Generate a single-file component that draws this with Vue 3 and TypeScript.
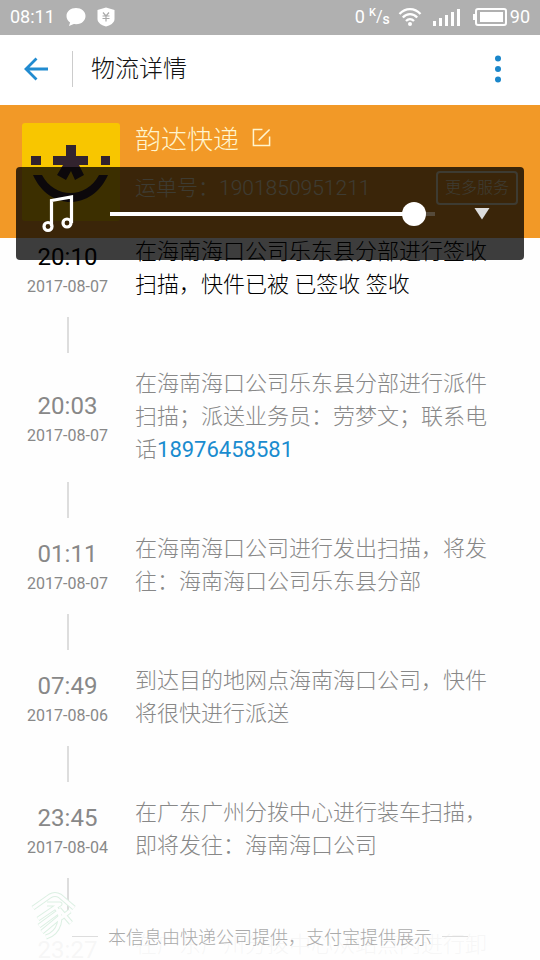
<script setup lang="ts">
import { ref } from 'vue'

interface Step {
  time: string
  date: string
  text: string
  phone?: string
}

const volume = ref<number>(97)

const steps: Step[] = [
  { time: '20:10', date: '2017-08-07', text: '在海南海口公司乐东县分部进行签收扫描，快件已被 已签收 签收' },
  { time: '20:03', date: '2017-08-07', text: '在海南海口公司乐东县分部进行派件扫描；派送业务员：劳梦文；联系电话', phone: '18976458581' },
  { time: '01:11', date: '2017-08-07', text: '在海南海口公司进行发出扫描，将发往：海南海口公司乐东县分部' },
  { time: '07:49', date: '2017-08-06', text: '到达目的地网点海南海口公司，快件将很快进行派送' },
  { time: '23:45', date: '2017-08-04', text: '在广东广州分拨中心进行装车扫描，即将发往：海南海口公司' },
  { time: '23:27', date: '2017-08-04', text: '在广东广州分拨中心从站点内进行卸车扫描' },
]
</script>

<template>
  <div class="screen">
    <div class="status">
      <span class="clock">08:11</span>
      <svg class="chat" width="20" height="20" viewBox="0 0 20 20"><path d="M10 1C4.600 1 .5 4.500 .5 9c0 2.700 1.400 5 3.600 6.500L3 19l4.800-2c8 1 11.700-3.500 11.700-8S15.400 1 10 1z" fill="#fff" /></svg>
      <svg width="18" height="20" viewBox="0 0 18 20"><path d="M9 .5 17.500 3v9c0 4-4.500 6.500-8.500 7.500C5 18.500.5 16 .5 12V3z" fill="#fff" /><path d="M6 5.500 9 9l3-3.500M5.500 9h7M5.500 11.500h7M9 9v5.500" fill="none" stroke="#aaa" stroke-width="1.200" /></svg>
      <span class="rate">0</span>
      <span class="unit"><sup>K</sup>/<sub>s</sub></span>
      <svg class="wifi" width="24" height="20" viewBox="0 0 24 20"><g fill="none" stroke="#fff" stroke-width="2.300"><path d="M1.500 7c6-6.500 15-6.500 21 0" /><path d="M4.800 10.500c4.200-4.500 10.200-4.500 14.400 0" /><path d="M8 14c2.400-2.500 5.600-2.500 8 0" /></g><circle cx="12" cy="17" r="2" fill="#fff" /></svg>
      <svg class="signal" width="28" height="18" viewBox="0 0 28 18"><path d="M0 13h3v5H0zM6 10h3v8H6zM12 7h3v11h-3zM18 4h3v14h-3zM24 1h3v17h-3z" fill="#fff" /></svg>
      <svg width="36" height="18" viewBox="0 0 36 18"><rect x="4" y="1" width="30" height="16" rx="2" fill="none" stroke="#fff" stroke-width="2" /><path d="M1 6h3v6H1zM8 4h23v10H8z" fill="#fff" /></svg>
      <span class="charge">90</span>
    </div>

    <header class="bar">
      <button class="back" type="button" aria-label="返回">
        <svg width="24" height="24" viewBox="0 0 24 24"><path d="M12.500 1.500 2 12l10.500 10.500M2 12h22" fill="none" stroke="#218bd0" stroke-width="2.800" /></svg>
      </button>
      <h1>物流详情</h1>
      <button class="more" type="button" aria-label="更多">
        <svg width="8" height="28" viewBox="0 0 8 28"><g fill="#1a86ca"><circle cx="4" cy="3.500" r="3" /><circle cx="4" cy="14" r="3" /><circle cx="4" cy="24.500" r="3" /></g></svg>
      </button>
    </header>

    <section class="courier">
      <svg class="logo" width="98" height="98" viewBox="0 0 98 98">
        <rect width="98" height="98" rx="3" fill="#f8c600" />
        <g fill="#32232e">
          <path d="M9 33h10v9H9zM79 33h9v9h-9z" />
          <path d="M44 22h10v11h12v9H57l5 10-9 5-4-9-5 9-9-5 6-10H31v-9h13z" />
          <path d="M11 52C27 88 70 88 86 52H77C64 76 33 76 20 52z" />
        </g>
      </svg>
      <div class="info">
        <div class="name">
          <span>韵达快递</span>
          <button type="button" aria-label="编辑"><svg width="19" height="19" viewBox="0 0 20 20"><path d="M11 1.500H1.500v17h17V9M7 13 18.500 1.500" fill="none" stroke="#fff5cf" stroke-width="1.600" /></svg></button>
        </div>
        <div class="number">
          <span>运单号：1901850951211</span>
          <button type="button" class="service">更多服务</button>
        </div>
      </div>
    </section>

    <ol class="steps">
      <li v-for="(step, i) in steps" :key="i" :class="{ latest: i === 0 }">
        <div class="when"><time>{{ step.time }}</time><small>{{ step.date }}</small></div>
        <p>{{ step.text }}<a v-if="step.phone" :href="'tel:' + step.phone">{{ step.phone }}</a></p>
      </li>
    </ol>

    <div class="volume">
      <svg class="note" width="32" height="38" viewBox="0 0 32 38"><g fill="none" stroke="#fff" stroke-width="3.200"><path d="M9.500 31V5.500L29.500 2v26" /><circle cx="6" cy="31.500" r="4" /><circle cx="25" cy="28" r="4" /></g></svg>
      <input v-model.number="volume" type="range" min="0" max="100" aria-label="音量" />
      <button type="button" aria-label="展开"><svg width="16" height="12" viewBox="0 0 16 12"><path d="M.5 0h15L8 11.500z" fill="#ddd" /></svg></button>
    </div>

    <footer class="notice"><i></i><span>本信息由快递公司提供，支付宝提供展示</span><i></i></footer>
    <svg class="mark" width="48" height="50" viewBox="0 0 48 50">
      <defs>
        <g id="mark-lines" fill="none" stroke-linejoin="round">
          <path d="M3 18 20 6q5-3 10 0L44 18" />
          <path d="M17 14h13L8 29M26 18Q32 24 29 34T16 47M28 22 9 36M30 27 12 42M29 19l12 14M40 21l-9 7" />
        </g>
      </defs>
      <use href="#mark-lines" stroke="#dcf0e3" stroke-width="5" />
      <use href="#mark-lines" stroke="#fefefe" stroke-width="3" />
    </svg>
  </div>
</template>

<style>
body {
  margin: 0;
  background: #fefefe;
}
</style>

<style scoped>
.screen {
  position: relative;
  height: 100vh;
  overflow: hidden;
  background: #fefefe;
  color: #888;
  font-family: Roboto, "Noto Sans CJK SC", sans-serif;
  font-weight: 300;
}
button {
  display: flex;
  padding: 0;
  border: 0;
  background: none;
  font: inherit;
  color: inherit;
}
.status {
  display: flex;
  align-items: center;
  box-sizing: border-box;
  height: 35px;
  padding: 0 10px 2px;
  background: #b0b0b0;
  color: #fff;
  font-size: 18px;
  font-weight: 400;
}
.chat {
  margin: 0 11px;
}
.rate {
  margin-left: auto;
}
.unit {
  margin: 0 8px 0 4px;
  font-size: 16px;
}
.unit sup,
.unit sub {
  font-size: 11px;
  font-weight: 500;
  line-height: 0;
}
.unit sub {
  font-size: 14px;
  vertical-align: -2px;
}
.wifi {
  margin-right: 11px;
}
.signal {
  margin-right: 11px;
}
.charge {
  margin-left: 2px;
}
.bar {
  display: flex;
  align-items: center;
  box-sizing: border-box;
  height: 70px;
  padding: 0 38px 2px 24px;
  background: #fff;
}
.back {
  padding-right: 24px;
}
.bar h1 {
  margin: 0;
  padding-left: 18px;
  border-left: 1px solid #ccc;
  color: #111;
  font-size: 24px;
  font-weight: 300;
  line-height: 36px;
}
.more {
  margin-left: auto;
}
.courier {
  display: flex;
  align-items: flex-start;
  gap: 15px;
  height: 115px;
  padding: 18px 22px 0;
  background: #f29927;
  color: #fff5cf;
}
.info {
  flex: 1;
}
.name {
  display: flex;
  align-items: center;
  gap: 13px;
  height: 28px;
  font-size: 26px;
}
.number {
  display: flex;
  align-items: center;
  justify-content: space-between;
  height: 34px;
  margin-top: 20px;
  font-size: 21px;
  line-height: 30px;
  white-space: nowrap;
}
.service {
  box-sizing: border-box;
  align-items: center;
  height: 34px;
  padding: 0 7px;
  border: 2px solid #fff5cf;
  border-radius: 4px;
  font-size: 16px;
}
.steps {
  position: relative;
  margin: -3px 0 0;
  padding: 0;
  list-style: none;
}
.steps li {
  position: relative;
  display: grid;
  grid-template-columns: 135px 1fr;
  align-items: center;
  padding-bottom: 66px;
}
.steps li::after {
  content: "";
  position: absolute;
  bottom: 14px;
  left: 67px;
  width: 2px;
  height: 36px;
  background: #ddd;
}
.when {
  display: flex;
  flex-direction: column;
  align-items: center;
  gap: 2px;
  padding-top: 8px;
}
.when time {
  font-size: 24px;
  line-height: 28px;
  font-weight: 400;
}
.when small {
  font-size: 16px;
  line-height: 28px;
  font-weight: 400;
}
.steps p {
  margin: 0;
  padding-right: 40px;
  font-size: 22px;
  line-height: 33px;
}
.steps a {
  color: #1a8ccf;
  font-weight: 400;
  text-decoration: none;
}
.latest p,
.latest time {
  color: #000;
}
.volume {
  position: absolute;
  top: 167px;
  right: 16px;
  left: 16px;
  display: flex;
  align-items: center;
  box-sizing: border-box;
  height: 93px;
  padding: 0 34px 0 26px;
  border-radius: 4px;
  background: rgba(0, 0, 0, 0.76);
}
.volume input {
  flex: 1;
  height: 26px;
  margin: 0 39px 0 36px;
  background: none;
  appearance: none;
}
.volume input::-webkit-slider-runnable-track {
  height: 4px;
  background: linear-gradient(90deg, #fff 94%, #554a3a 94%);
}
.volume input::-webkit-slider-thumb {
  width: 24px;
  height: 24px;
  margin-top: -10px;
  border-radius: 50%;
  background: #fff;
  appearance: none;
}
.notice {
  position: absolute;
  right: 0;
  bottom: 0;
  left: 0;
  display: flex;
  align-items: center;
  justify-content: center;
  gap: 10px;
  height: 48px;
  background: rgba(254, 254, 254, 0.93);
  color: #aaa;
  font-size: 18px;
}
.notice i {
  width: 26px;
  height: 1px;
  background: #ddd;
}
.mark {
  position: absolute;
  bottom: 20px;
  left: 30px;
}
</style>
